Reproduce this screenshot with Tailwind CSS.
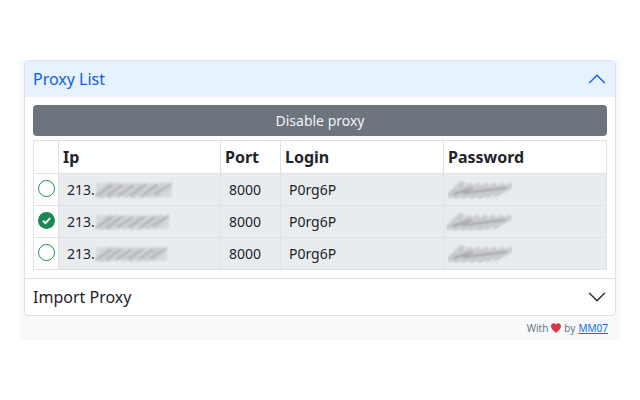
<!DOCTYPE html>
<html lang="en">
<head>
  <meta charset="UTF-8">
  <title>Proxy List</title>
  <script src="https://cdn.jsdelivr.net/npm/@tailwindcss/browser@4"></script>
</head>
<body class="bg-white text-[#212529] font-['Noto_Sans',sans-serif] h-[400px] overflow-hidden">
  <svg width="0" height="0" class="absolute">
    <defs>
      <filter id="smear" x="-10%" y="-30%" width="120%" height="160%"><feGaussianBlur stdDeviation="1.1 0.9"/></filter>
      <g id="ipblur" filter="url(#smear)" fill="none" stroke-linecap="round">
        <rect x="1" y="2" width="76" height="14" fill="#d6d8da" stroke="none"/>
        <path d="M1 15 L15 3 M7 16 L22 3 M15 16 L30 4 M23 15 L38 4 M31 15 L44 5 M38 16 L52 4 M46 16 L60 4 M54 15 L68 3 M62 15 L76 3" stroke="#cbcdd0" stroke-width="4"/>
        <path d="M3 14 L17 4 M12 15 L27 4 M24 14 L38 5 M36 14 L50 4 M48 14 L62 4 M60 13 L74 4" stroke="#a8aaad" stroke-width="1.800"/>
      </g>
      <g id="pwblur" filter="url(#smear)" fill="none" stroke-linecap="round">
        <path d="M2 14 L14 3 M8 15 L22 5 M16 15 L30 5 M24 15 L38 5 M32 15 L46 5 M40 14 L54 5 M48 13 L62 5" stroke="#c9cbce" stroke-width="6"/>
        <path d="M6 13 L24 7 M16 12 L58 7" stroke="#929497" stroke-width="1.600"/>
      </g>
    </defs>
  </svg>

  <div class="ml-5 mt-[60px] w-[600px] h-[280px] bg-[#f8f9fa] px-1 flex flex-col">
    <div class="bg-white border border-[#dee2e6] rounded-[5px] w-[592px] h-[256px] flex flex-col overflow-hidden">
      <!-- open item -->
      <div class="h-9 shrink-0 bg-[#e7f1ff] text-[#0c63e4] flex items-center justify-between px-2 text-base">
        <span>Proxy List</span>
        <svg class="w-5 h-5" viewBox="0 0 16 16" fill="#0c63e4"><path fill-rule="evenodd" d="M1.646 11.354a.5.5 0 0 1 0-.708l6-6a.5.5 0 0 1 .708 0l6 6a.5.5 0 0 1-.708.708L8 5.707l-5.646 5.647a.5.5 0 0 1-.708 0z"/></svg>
      </div>

      <div class="px-2 pt-2 pb-2 h-[182px] shrink-0 border-b border-[#dee2e6]">
        <button class="w-full h-[31px] bg-[#6c757d] text-[#f1f2f3] text-sm rounded-[4px] block">Disable proxy</button>

        <table class="mt-1 w-[574px] table-fixed border-collapse text-sm">
          <colgroup>
            <col class="w-[25px]"><col class="w-[162px]"><col class="w-[60px]"><col class="w-[163px]"><col>
          </colgroup>
          <thead>
            <tr class="h-[33px] text-base font-bold text-left">
              <th class="border border-[#dee2e6] bg-white"></th>
              <th class="border border-[#dee2e6] bg-white pl-1">Ip</th>
              <th class="border border-[#dee2e6] bg-white pl-1">Port</th>
              <th class="border border-[#dee2e6] bg-white pl-1">Login</th>
              <th class="border border-[#dee2e6] bg-white pl-1">Password</th>
            </tr>
          </thead>
          <tbody>
            <tr class="h-8">
              <td class="border border-[#dee2e6] bg-white">
                <svg class="w-[17px] h-[17px] block mx-auto -mt-[3px]" viewBox="0 0 17 17"><circle cx="8.500" cy="8.500" r="8" fill="#fff" stroke="#198754"/></svg>
              </td>
              <td class="border border-[#dee2e6] bg-[#e9ecef] pl-2">
                <div class="flex items-center"><span>213.</span><svg class="w-[78px] h-[18px]" viewBox="0 0 78 18"><use href="#ipblur"/></svg></div>
              </td>
              <td class="border border-[#dee2e6] bg-[#e9ecef] pl-2">8000</td>
              <td class="border border-[#dee2e6] bg-[#e9ecef] pl-2">P0rg6P</td>
              <td class="border border-[#dee2e6] bg-[#e9ecef] pl-1">
                <svg class="w-16 h-[18px] block" viewBox="0 0 64 18"><use href="#pwblur"/></svg>
              </td>
            </tr>
            <tr class="h-8">
              <td class="border border-[#dee2e6] bg-white">
                <svg class="w-[17px] h-[17px] block mx-auto -mt-[3px]" viewBox="0 0 16 16"><circle cx="8" cy="8" r="8" fill="#198754"/><path d="M4.600 8.200 L7 10.500 L11.400 5.800" fill="none" stroke="#fff" stroke-width="1.900"/></svg>
              </td>
              <td class="border border-[#dee2e6] bg-[#e9ecef] pl-2">
                <div class="flex items-center"><span>213.</span><svg class="w-[75px] h-[18px]" viewBox="0 0 78 18"><use href="#ipblur"/></svg></div>
              </td>
              <td class="border border-[#dee2e6] bg-[#e9ecef] pl-2">8000</td>
              <td class="border border-[#dee2e6] bg-[#e9ecef] pl-2">P0rg6P</td>
              <td class="border border-[#dee2e6] bg-[#e9ecef] pl-1">
                <svg class="w-[66px] h-[18px] block -ml-[2px]" viewBox="0 0 64 18"><use href="#pwblur"/></svg>
              </td>
            </tr>
            <tr class="h-8">
              <td class="border border-[#dee2e6] bg-white">
                <svg class="w-[17px] h-[17px] block mx-auto -mt-[3px]" viewBox="0 0 17 17"><circle cx="8.500" cy="8.500" r="8" fill="#fff" stroke="#198754"/></svg>
              </td>
              <td class="border border-[#dee2e6] bg-[#e9ecef] pl-2">
                <div class="flex items-center"><span>213.</span><svg class="w-[73px] h-[18px]" viewBox="0 0 78 18"><use href="#ipblur"/></svg></div>
              </td>
              <td class="border border-[#dee2e6] bg-[#e9ecef] pl-2">8000</td>
              <td class="border border-[#dee2e6] bg-[#e9ecef] pl-2">P0rg6P</td>
              <td class="border border-[#dee2e6] bg-[#e9ecef] pl-1">
                <svg class="w-16 h-[18px] block" viewBox="0 0 64 18"><use href="#pwblur"/></svg>
              </td>
            </tr>
          </tbody>
        </table>
      </div>

      <!-- collapsed item -->
      <div class="flex-1 flex items-center justify-between px-2 text-base">
        <span>Import Proxy</span>
        <svg class="w-5 h-5" viewBox="0 0 16 16" fill="#212529"><path fill-rule="evenodd" d="M1.646 4.646a.5.5 0 0 1 .708 0L8 10.293l5.646-5.647a.5.5 0 0 1 .708.708l-6 6a.5.5 0 0 1-.708 0l-6-6a.5.5 0 0 1 0-.708z"/></svg>
      </div>
    </div>

    <div class="flex justify-end items-center gap-[3px] h-[24px] pr-2 text-[10px] text-[#6c757d]">
      <span>With</span>
      <svg class="w-[10px] h-[10px]" viewBox="1 1.500 14 13.500" fill="#dc3545"><path d="M8 15S1 10.500 1 5.500C1 3 3 1.500 4.800 1.500 6.300 1.500 7.400 2.400 8 3.500 8.600 2.400 9.700 1.500 11.200 1.500 13 1.500 15 3 15 5.500 15 10.500 8 15 8 15z"/></svg>
      <span>by</span>
      <a href="#" class="text-[#0d6efd] underline">MM07</a>
    </div>
  </div>
</body>
</html>
